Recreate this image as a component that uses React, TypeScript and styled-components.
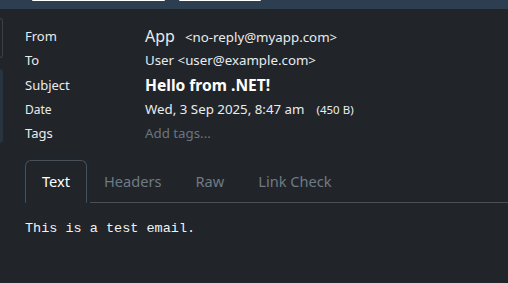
import React from "react";
import styled, { createGlobalStyle } from "styled-components";

const Global = createGlobalStyle`
  html, body {
    margin: 0;
    padding: 0;
    background: #212529;
    overflow: hidden;
  }
  body {
    font-family: "Segoe UI", "Noto Sans", "Open Sans", sans-serif;
    color: #dee2e6;
  }
`;

const TopBar = styled.div`
  height: 9px;
  background: #2c3e50;
  display: flex;
  gap: 14px;
  padding-left: 32px;
`;

const TopControl = styled.div<{ w: number }>`
  width: ${(p) => p.w}px;
  height: 1px;
  background: #ffffff;
  border-radius: 0 0 2px 2px;
`;

const Body = styled.div`
  display: flex;
`;

const SideStrip = styled.div`
  width: 3px;
  display: flex;
  flex-direction: column;
  padding-top: 9px;
  gap: 11px;
`;

const SideCard = styled.div`
  height: 40px;
  border: 1px solid #3b4148;
  border-left: none;
  border-radius: 0 5px 5px 0;
  box-sizing: border-box;
`;

const SidePanel = styled.div`
  height: 74px;
  background: #283340;
  border-radius: 0 4px 4px 0;
`;

const Main = styled.div`
  flex: 1;
  padding: 15px 0 0 22px;
`;

const Meta = styled.div`
  display: grid;
  grid-template-columns: 120px 1fr;
  grid-auto-rows: 24.3px;
  align-items: center;
`;

const Label = styled.div<{ small?: boolean }>`
  font-size: ${(p) => (p.small ? "12px" : "13px")};
  color: #e9ecef;
`;

const Value = styled.div`
  font-size: 13.3px;
  color: #e9ecef;
  white-space: nowrap;
`;

const Name = styled.span`
  font-size: 16px;
  margin-right: 10px;
`;

const Subject = styled.span`
  font-size: 15.6px;
  font-weight: 700;
  color: #ffffff;
`;

const Size = styled.span`
  font-size: 11.5px;
  margin-left: 12px;
`;

const Placeholder = styled.span`
  color: #6c757d;
`;

const Tabs = styled.div`
  display: flex;
  margin-top: 15px;
  border-bottom: 1px solid #4a5058;
`;

const Tab = styled.div<{ active?: boolean }>`
  padding: 8px 16px 9px;
  font-size: 14.6px;
  line-height: 24px;
  margin-bottom: -1px;
  border: 1px solid ${(p) => (p.active ? "#4a5058" : "transparent")};
  border-bottom-color: ${(p) => (p.active ? "#212529" : "transparent")};
  border-radius: 6px 6px 0 0;
  color: ${(p) => (p.active ? "#ffffff" : "#6f7a86")};
  box-shadow: ${(p) => (p.active ? "0 0 0 3px #1e252c" : "none")};
`;

const Content = styled.pre`
  margin: 18px 0 0;
  font-family: "Liberation Mono", "Courier New", monospace;
  font-size: 13.5px;
  color: #f1f3f5;
`;

export default function App() {
  return (
    <>
      <Global />
      <TopBar>
        <TopControl w={133} />
        <TopControl w={82} />
      </TopBar>
      <Body>
        <SideStrip>
          <SideCard />
          <SidePanel />
        </SideStrip>
        <Main>
          <Meta>
            <Label>From</Label>
            <Value>
              <Name>App</Name>&lt;no-reply@myapp.com&gt;
            </Value>
            <Label>To</Label>
            <Value>User &lt;user@example.com&gt;</Value>
            <Label>Subject</Label>
            <Value>
              <Subject>Hello from .NET!</Subject>
            </Value>
            <Label small>Date</Label>
            <Value>
              Wed, 3 Sep 2025, 8:47 am<Size>(450 B)</Size>
            </Value>
            <Label>Tags</Label>
            <Value>
              <Placeholder>Add tags...</Placeholder>
            </Value>
          </Meta>
          <Tabs>
            <Tab active>Text</Tab>
            <Tab>Headers</Tab>
            <Tab>Raw</Tab>
            <Tab>Link Check</Tab>
          </Tabs>
          <Content>This is a test email.</Content>
        </Main>
      </Body>
    </>
  );
}
